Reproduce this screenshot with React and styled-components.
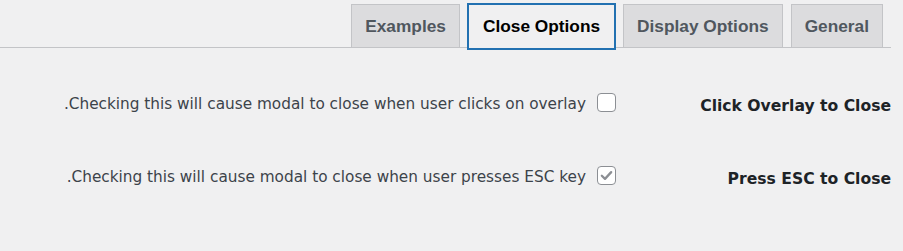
import React from "react"
import styled, { createGlobalStyle } from "styled-components"

const GlobalStyle = createGlobalStyle`
  html, body {
    margin: 0;
    padding: 0;
    background: #f0f0f1;
  }
  body {
    font-family: "DejaVu Sans", Tahoma, sans-serif;
  }
`

const Wrap = styled.div`
  direction: rtl;
  margin-right: 12px;
  min-height: 251px;
`

const TabBar = styled.nav`
  display: flex;
  align-items: flex-end;
  gap: 8px;
  padding: 3px 8px 0 0;
  border-bottom: 1px solid #c3c4c7;
`

const Tab = styled.a`
  position: relative;
  box-sizing: border-box;
  display: flex;
  align-items: center;
  height: ${(p) => (p.$active ? "47px" : "44px")};
  margin: ${(p) => (p.$active ? "0 -1px -3px" : "0 0 -1px")};
  padding: 0 ${(p) => (p.$active ? "14px" : "13px")};
  border: ${(p) => (p.$active ? "2px solid #2271b1" : "1px solid #c3c4c7")};
  background: ${(p) => (p.$active ? "#f0f0f1" : "#dcdcde")};
  color: ${(p) => (p.$active ? "#000" : "#50575e")};
  font-family: "Liberation Sans", Arial, sans-serif;
  font-size: 17.3px;
  font-weight: 700;
  text-decoration: none;
  white-space: nowrap;
  z-index: ${(p) => (p.$active ? 1 : 0)};
`

const Form = styled.div`
  margin-top: 19px;
`

const Row = styled.div`
  display: flex;
  align-items: center;
  height: 73px;
`

const Label = styled.div`
  width: 255px;
  margin-left: 20px;
  color: #1d2327;
  font-size: 15.6px;
  font-weight: 700;
  text-align: right;
  padding-top: 4px;
`

const Field = styled.label`
  display: flex;
  align-items: center;
  gap: 11px;
  color: #3c434a;
  font-size: 15.3px;
`

const Box = styled.span`
  box-sizing: border-box;
  width: 19px;
  height: 19px;
  border: 1px solid #8c8f94;
  border-radius: 4px;
  background: #fff;
  display: flex;
  align-items: center;
  justify-content: center;
  margin-top: -2px;
`

const Desc = styled.span`
  padding-top: 1px;
`

function Checkbox({ checked }) {
  return (
    <Box>
      {checked && (
        <svg width="15" height="15" viewBox="0 0 16 16">
          <path
            d="M3 8.2 L6.4 11.6 L13 4.4"
            fill="none"
            stroke="#8c8f94"
            strokeWidth="2.4"
            strokeLinecap="round"
            strokeLinejoin="round"
          />
        </svg>
      )}
    </Box>
  )
}

const tabs = ["General", "Display Options", "Close Options", "Examples"]

const rows = [
  {
    label: "Click Overlay to Close",
    desc: "Checking this will cause modal to close when user clicks on overlay.",
    checked: false,
  },
  {
    label: "Press ESC to Close",
    desc: "Checking this will cause modal to close when user presses ESC key.",
    checked: true,
  },
]

export default function App() {
  return (
    <>
      <GlobalStyle />
      <Wrap>
        <TabBar>
          {tabs.map((t) => (
            <Tab key={t} href="#" $active={t === "Close Options"}>
              {t}
            </Tab>
          ))}
        </TabBar>
        <Form>
          {rows.map((r) => (
            <Row key={r.label}>
              <Label>{r.label}</Label>
              <Field>
                <Checkbox checked={r.checked} />
                <Desc>{r.desc}</Desc>
              </Field>
            </Row>
          ))}
        </Form>
      </Wrap>
    </>
  )
}
